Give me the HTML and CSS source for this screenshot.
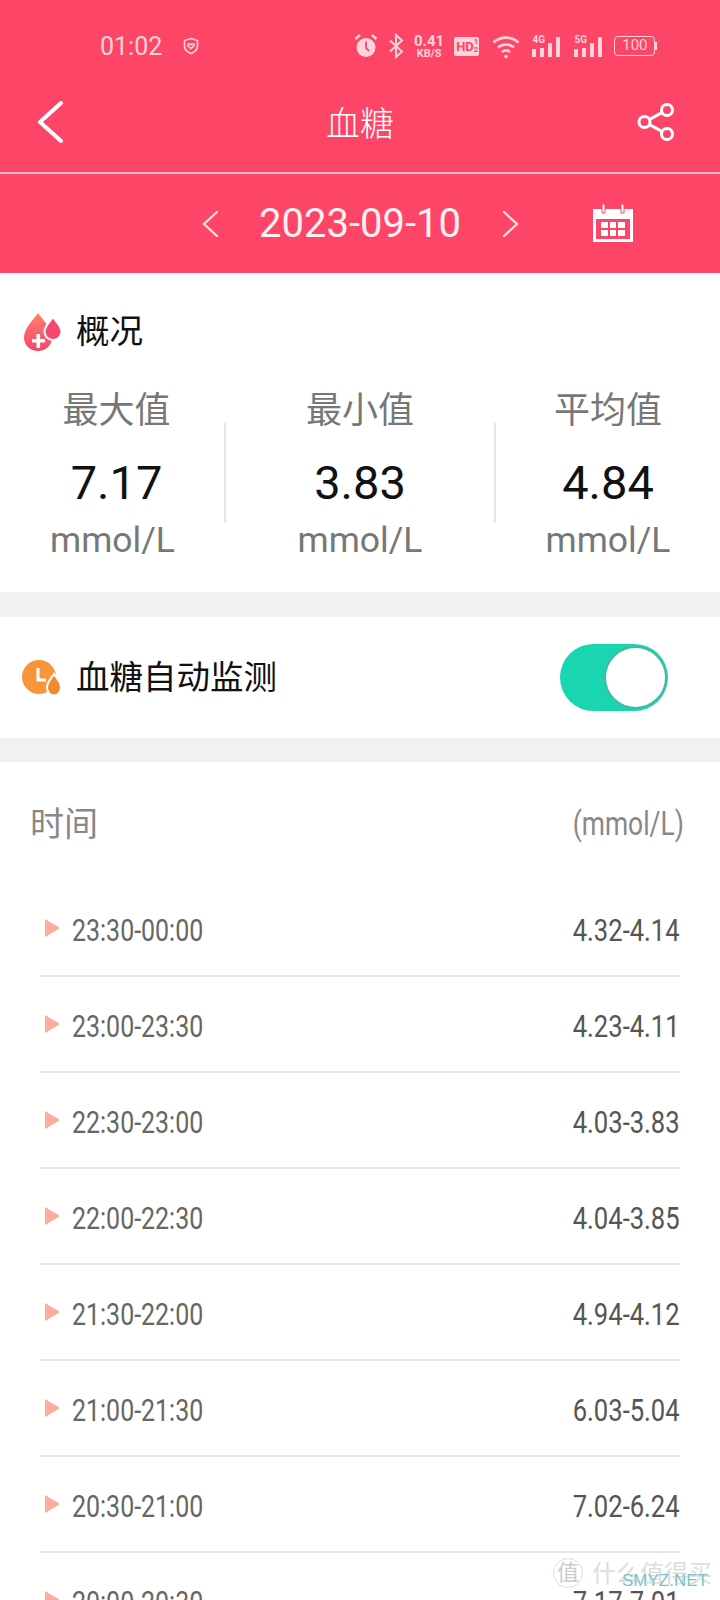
FILE: index.html
```html
<!DOCTYPE html>
<html lang="zh-CN">
  <head>
    <meta charset="UTF-8" />
    <meta name="viewport" content="width=device-width, initial-scale=1.0" />
    <title>血糖</title>
    <link rel="stylesheet" href="styles.css">
  </head>
  <body>
    <header class="header">
      <div class="status">
        <span class="clock">01:02</span>
        <svg class="shield" width="16" height="18" viewBox="0 0 16 18" fill="none" stroke="#ffd3da" stroke-width="1.6">
          <path d="M8 1.5 14.5 3.5V9c0 3.6-2.800 6-6.500 7.500C4.300 15 1.500 12.600 1.500 9V3.500Z" />
          <path d="M8 11.500 5 8.600c-1-1.300.8-2.800 3-1 2.200-1.800 4-.3 3 1Z" />
        </svg>
        <div class="status-icons">
          <svg class="icon-alarm" width="24" height="26" viewBox="0 0 24 26">
            <circle cx="12" cy="14.500" r="9.500" fill="#ffd3da" />
            <path d="M12 8.500V15l3 3" fill="none" stroke="#fd4568" stroke-width="1.800" />
            <path d="M1.500 6 6 2M22.500 6 18 2" fill="none" stroke="#ffd3da" stroke-width="2.400" />
          </svg>
          <svg class="icon-bt" width="16" height="26" viewBox="0 0 16 26" fill="none" stroke="#ffd3da" stroke-width="2">
            <path d="M2 7.500 14 18.500 8 24V2l6 5.500L2 18.500" />
          </svg>
          <div class="speed"><span class="speed-num">0.41</span><span class="speed-unit">KB/S</span></div>
          <div class="hd"><span class="hd-text">HD</span><span class="hd-sub">1<br />2</span></div>
          <svg class="icon-wifi" width="28" height="26" viewBox="0 0 28 26" fill="none" stroke="#ffd3da" stroke-width="2.600">
            <path d="M1.500 9.500C8.500 3 19.500 3 26.500 9.500" />
            <path d="M6 14.500c4.500-4 11.500-4 16 0" />
            <path d="M10 19c2.400-1.900 5.600-1.900 8 0" />
            <circle cx="14" cy="23.500" r="1.800" fill="#ffd3da" stroke="none" />
          </svg>
          <div class="signal">
            <span class="signal-type">4G</span>
            <i class="bar bar-1"></i><i class="bar bar-2"></i><i class="bar bar-3"></i><i class="bar bar-4"></i>
          </div>
          <div class="signal">
            <span class="signal-type">5G</span>
            <i class="bar bar-1"></i><i class="bar bar-2"></i><i class="bar bar-3"></i><i class="bar bar-4"></i>
          </div>
          <div class="battery"><span class="battery-body">100</span><i class="battery-tip"></i></div>
        </div>
      </div>

      <div class="topbar">
        <svg class="back" width="26" height="42" viewBox="0 0 26 42" fill="none" stroke="#fff" stroke-width="4" stroke-linecap="round" stroke-linejoin="round">
          <path d="M24 2 3 21l21 19" />
        </svg>
        <h1 class="title">血糖</h1>
        <svg class="share" width="38" height="38" viewBox="0 0 38 38" fill="none" stroke="#fff" stroke-width="3">
          <circle cx="7.500" cy="19" r="5.500" />
          <circle cx="30" cy="7" r="5.500" />
          <circle cx="30" cy="31" r="5.500" />
          <path d="M12.500 16.300 25 9.700M12.500 21.700 25 28.300" />
        </svg>
      </div>

      <div class="datebar">
        <svg class="chev" width="16" height="26" viewBox="0 0 16 26" fill="none" stroke="#ffe3e8" stroke-width="2.200" stroke-linecap="round">
          <path d="M15 1 2 13l13 12" />
        </svg>
        <span class="date">2023-09-10</span>
        <svg class="chev" width="16" height="26" viewBox="0 0 16 26" fill="none" stroke="#ffe3e8" stroke-width="2.200" stroke-linecap="round">
          <path d="M1 1l13 12L1 25" />
        </svg>
        <svg class="calendar" width="40" height="38" viewBox="0 0 40 38">
          <path d="M0 5h40v33H0Z" fill="#fff" />
          <path d="M3 15h34v20H3Z" fill="#fd4568" />
          <path d="M9 0h3v9H9ZM28 0h3v9h-3Z" fill="#fff" stroke="#fd4568" stroke-width="1" />
          <path d="M8 18h7v6H8ZM17 18h6v6h-6ZM25 18h7v6h-7ZM8 26h7v6H8ZM17 26h6v6h-6ZM25 26h7v6h-7Z" fill="#fff" />
        </svg>
      </div>
    </header>

    <main>
      <section class="overview">
        <div class="section-head">
          <svg class="section-icon" width="38" height="38" viewBox="0 0 38 38">
            <defs>
              <linearGradient id="dropFill" x1="0" y1="0" x2="0" y2="1">
                <stop offset="0" stop-color="#ff8068" />
                <stop offset="1" stop-color="#f5476c" />
              </linearGradient>
            </defs>
            <path d="M14 0C18 6 28 15 28 24.500 28 32.500 21.800 38 14 38S0 32.500 0 24.500C0 15 10 6 14 0Z" fill="url(#dropFill)" />
            <path d="M29 4c2.500 4 8.500 9 8.500 14.500 0 5-3.800 8.500-8.500 8.500s-8.500-3.500-8.500-8.500C20.500 13 26.500 8 29 4Z" fill="#f5476c" stroke="#fff" stroke-width="2" />
            <path d="M12.500 21h3.600v5H21v3.500h-4.900V35h-3.600v-5.500H8V26h4.500Z" fill="#fff" />
          </svg>
          <span class="section-name">概况</span>
        </div>
        <div class="stats">
          <div class="stat stat-first">
            <div class="stat-label">最大值</div>
            <div class="stat-value">7.17</div>
            <div class="stat-unit">mmol/L</div>
          </div>
          <div class="divider"></div>
          <div class="stat">
            <div class="stat-label">最小值</div>
            <div class="stat-value">3.83</div>
            <div class="stat-unit">mmol/L</div>
          </div>
          <div class="divider"></div>
          <div class="stat">
            <div class="stat-label">平均值</div>
            <div class="stat-value">4.84</div>
            <div class="stat-unit">mmol/L</div>
          </div>
        </div>
      </section>

      <section class="monitor">
        <svg class="section-icon" width="40" height="36" viewBox="0 0 40 36">
          <circle cx="17" cy="17" r="17" fill="#f8953a" />
          <path d="M16 8v12h8" fill="none" stroke="#fff" stroke-width="3" />
          <path d="M32 14c2 3.500 7 8 7 13.500 0 4.500-3.200 8-7 8s-7-3.500-7-8C25 22 30 17.500 32 14Z" fill="#f28a2c" stroke="#fff" stroke-width="2" />
        </svg>
        <span class="section-name">血糖自动监测</span>
        <div class="toggle"><div class="knob"></div></div>
      </section>

      <section class="records">
        <div class="records-head">
          <span class="records-time">时间</span>
          <span class="records-unit">(mmol/L)</span>
        </div>
        <ul class="rows">
          <li class="row"><i class="arrow"></i><span class="row-time">23:30-00:00</span><span class="row-value">4.32-4.14</span></li>
          <li class="row"><i class="arrow"></i><span class="row-time">23:00-23:30</span><span class="row-value">4.23-4.11</span></li>
          <li class="row"><i class="arrow"></i><span class="row-time">22:30-23:00</span><span class="row-value">4.03-3.83</span></li>
          <li class="row"><i class="arrow"></i><span class="row-time">22:00-22:30</span><span class="row-value">4.04-3.85</span></li>
          <li class="row"><i class="arrow"></i><span class="row-time">21:30-22:00</span><span class="row-value">4.94-4.12</span></li>
          <li class="row"><i class="arrow"></i><span class="row-time">21:00-21:30</span><span class="row-value">6.03-5.04</span></li>
          <li class="row"><i class="arrow"></i><span class="row-time">20:30-21:00</span><span class="row-value">7.02-6.24</span></li>
          <li class="row"><i class="arrow"></i><span class="row-time">20:00-20:30</span><span class="row-value">7.17-7.01</span></li>
        </ul>
      </section>
    </main>

    <div class="watermark">
      <span class="wm-seal">值</span>
      <span class="wm-name">什么值得买</span>
      <span class="wm-site">SMYZ.NET</span>
    </div>
  </body>
</html>
```

FILE: styles.css
```css
* {
  box-sizing: border-box;
}

html,
body {
  height: 1600px;
}

body {
  position: relative;
  margin: 0;
  overflow: hidden;
  background-color: #fff;
  font-family: Roboto, "Noto Sans CJK SC", sans-serif;
}

svg {
  display: block;
  flex: none;
}

.header {
  background-color: #fd4568;
  color: #fff;
}

.status {
  display: flex;
  align-items: center;
  height: 92px;
  padding-left: 100px;
  color: #ffd3da;
}

.clock {
  width: 83px;
  font-size: 25px;
}

.status-icons {
  display: flex;
  align-items: center;
  margin-left: 155px;
}

.icon-bt {
  margin-left: 10px;
}

.speed {
  display: flex;
  flex-direction: column;
  align-items: center;
  margin-left: 10px;
  font-weight: 700;
}

.speed-num {
  font-size: 15px;
  line-height: 14px;
}

.speed-unit {
  font-size: 11px;
  line-height: 11px;
}

.hd {
  display: flex;
  align-items: center;
  height: 19px;
  margin-left: 10px;
  padding: 0 1px 0 2px;
  border-radius: 2px;
  background-color: #ffd3da;
  color: #fd4568;
  font-weight: 700;
}

.hd-text {
  font-size: 13px;
}

.hd-sub {
  font-size: 8px;
  line-height: 8px;
  text-align: center;
}

.icon-wifi {
  margin-left: 13px;
}

.signal {
  display: flex;
  align-items: flex-end;
  gap: 4px;
  position: relative;
  width: 28px;
  height: 21px;
  margin-left: 12px;
}

.signal + .signal {
  margin-left: 14px;
}

.signal-type {
  position: absolute;
  top: -2px;
  left: 0;
  font-size: 10px;
  font-weight: 700;
  line-height: 11px;
}

.bar {
  width: 4px;
  background-color: #ffd3da;
}

.bar-1 {
  height: 8px;
}

.bar-2 {
  height: 9px;
}

.bar-3 {
  height: 14px;
}

.bar-4 {
  height: 20px;
}

.battery {
  display: flex;
  align-items: center;
  margin-left: 12px;
}

.battery-body {
  width: 41px;
  height: 20px;
  border: 1.500px solid #ffd3da;
  border-radius: 4px;
  font-size: 15px;
  line-height: 17px;
  text-align: center;
}

.battery-tip {
  width: 2px;
  height: 8px;
  background-color: #ffd3da;
}

.topbar {
  display: grid;
  grid-template-columns: 1fr auto 1fr;
  align-items: center;
  height: 80px;
  padding: 0 37px 20px;
}

.title {
  margin: 4px 0 0;
  font-size: 34px;
  font-weight: 300;
  line-height: 56px;
}

.share {
  justify-self: end;
  margin-right: 8px;
}

.datebar {
  display: flex;
  align-items: center;
  height: 101px;
  padding-left: 202px;
  border-top: 2px solid #ffb9c5;
}

.date {
  margin: 0 42px 0 41px;
  font-size: 40px;
  color: #fff1f3;
}

.calendar {
  margin: -2px 0 0 74px;
}

.overview {
  padding: 37px 0 32px;
}

.section-head {
  display: flex;
  align-items: center;
  height: 44px;
  padding-left: 24px;
}

.section-name {
  margin-left: 14px;
  color: #111;
  font-size: 33.500px;
  line-height: 44px;
}

.stats {
  display: grid;
  grid-template-columns: 224px 2px 268px 2px 224px;
  align-items: center;
  margin-top: 32px;
}

.stat {
  display: flex;
  flex-direction: column;
  align-items: center;
}

.stat-first {
  padding-left: 9px;
}

.stat-first .stat-unit {
  margin-right: 8px;
}

.stat-label {
  color: #777;
  font-size: 36px;
  line-height: 50px;
}

.stat-value {
  margin-top: 17px;
  color: #111;
  font-size: 47px;
  line-height: 60px;
}

.stat-unit {
  margin-top: 7px;
  color: #777;
  font-size: 35.500px;
  line-height: 40px;
}

.divider {
  height: 100px;
  background-color: #e6e6e6;
}

.monitor {
  display: flex;
  align-items: center;
  height: 170px;
  padding: 25px 52px 25px 22px;
  border-top: 25px solid #f1f1f1;
  border-bottom: 24px solid #f1f1f1;
}

.monitor .section-name {
  margin-left: 14px;
}

.toggle {
  display: flex;
  justify-content: flex-end;
  width: 108px;
  height: 67px;
  margin-left: auto;
  padding: 2px 1px;
  border-radius: 34px;
  background-color: #1ad6b0;
}

.knob {
  width: 63px;
  height: 63px;
  border: 2px solid #45b9a2;
  border-radius: 50%;
  background-color: #fff;
}

.records-head {
  display: flex;
  align-items: center;
  justify-content: space-between;
  padding: 42px 36px 37px 30px;
  color: #888;
  line-height: 40px;
}

.records-time {
  font-size: 34px;
}

.records-unit {
  font-size: 33px;
  transform: scaleX(0.8);
  transform-origin: right center;
}

.rows {
  margin: 0 40px;
  padding: 0;
  list-style: none;
}

.row {
  display: flex;
  align-items: center;
  height: 96px;
  border-bottom: 2px solid #e6e6e6;
  font-size: 32px;
}

.arrow {
  flex: none;
  width: 0;
  height: 0;
  margin: 0 12px 0 5px;
  border-top: 9px solid transparent;
  border-bottom: 9px solid transparent;
  border-left: 15px solid #ffaa9c;
}

/* no condensed face installed, so the DIN-like numbers get squeezed */
.row-time {
  padding-top: 4px;
  color: #666;
  transform: scaleX(0.78);
  transform-origin: left center;
}

.row-value {
  margin-left: auto;
  padding-top: 4px;
  color: #555;
  transform: scaleX(0.8);
  transform-origin: right center;
}

.watermark {
  position: absolute;
  top: 1558px;
  left: 553px;
  width: 167px;
  height: 42px;
}

.wm-seal {
  position: absolute;
  top: 0;
  left: 0;
  width: 30px;
  height: 30px;
  border: 1px solid #ddd;
  border-radius: 50%;
  color: #ccc;
  font-size: 22px;
  line-height: 28px;
  text-align: center;
}

.wm-name {
  position: absolute;
  top: 1px;
  left: 39px;
  color: #ddd;
  font-size: 24px;
  line-height: 30px;
  white-space: nowrap;
}

.wm-site {
  position: absolute;
  top: 13px;
  left: 69px;
  color: #7cc4c9;
  font-family: "Liberation Sans", sans-serif;
  font-size: 17px;
  line-height: 20px;
  white-space: nowrap;
}
```
